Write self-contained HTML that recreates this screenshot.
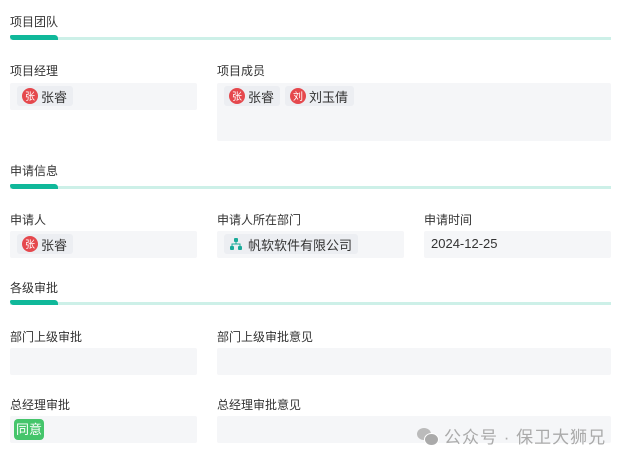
<!DOCTYPE html><html><head><style>
body{margin:0;width:625px;height:460px;background:#fff;font-family:"Liberation Sans","Noto Sans CJK SC",sans-serif;font-size:12px;color:#333;position:relative;overflow:hidden}
.a{position:absolute}
.t{font-size:12px;color:#333}
.line{position:absolute;left:10px;width:601px;height:3px;background:#cdf0e8}
.thick{position:absolute;left:10px;width:48px;height:5px;background:#10b89a;border-radius:2px 4px 0 4px}
.box{position:absolute;background:#f5f6f8;border-radius:2px}
.tag{position:absolute;background:#eceef2;border-radius:3px;height:20px;padding:0 6px 0 5px;font-size:13px;white-space:nowrap;display:flex;align-items:center}
.av{width:16px;height:16px;margin-right:3px;flex:none}
</style></head><body>
<div class="a t" style="left:10px;top:13px">项目团队</div>
<div class="line" style="top:37px"></div><div class="thick" style="top:35px"></div>
<div class="a t" style="left:10px;top:62px">项目经理</div>
<div class="a t" style="left:217px;top:62px">项目成员</div>
<div class="box" style="left:10px;top:83px;width:187px;height:27px"></div>
<div class="tag" style="left:17px;top:86px"><svg class="av" viewBox="0 0 16 16"><circle cx="8" cy="8" r="8" fill="#e5484d"/><text x="8" y="12" text-anchor="middle" font-size="10" fill="#fff" font-family="Noto Sans CJK SC">张</text></svg>张睿</div>
<div class="box" style="left:217px;top:83px;width:394px;height:58px"></div>
<div class="tag" style="left:224px;top:86px"><svg class="av" viewBox="0 0 16 16"><circle cx="8" cy="8" r="8" fill="#e5484d"/><text x="8" y="12" text-anchor="middle" font-size="10" fill="#fff" font-family="Noto Sans CJK SC">张</text></svg>张睿</div>
<div class="tag" style="left:285px;top:86px"><svg class="av" viewBox="0 0 16 16"><circle cx="8" cy="8" r="8" fill="#e5484d"/><text x="8" y="12" text-anchor="middle" font-size="10" fill="#fff" font-family="Noto Sans CJK SC">刘</text></svg>刘玉倩</div>

<div class="a t" style="left:10px;top:162px">申请信息</div>
<div class="line" style="top:186px"></div><div class="thick" style="top:184px"></div>
<div class="a t" style="left:10px;top:211px">申请人</div>
<div class="a t" style="left:217px;top:211px">申请人所在部门</div>
<div class="a t" style="left:424px;top:211px">申请时间</div>
<div class="box" style="left:10px;top:231px;width:187px;height:27px"></div>
<div class="tag" style="left:17px;top:234px"><svg class="av" viewBox="0 0 16 16"><circle cx="8" cy="8" r="8" fill="#e5484d"/><text x="8" y="12" text-anchor="middle" font-size="10" fill="#fff" font-family="Noto Sans CJK SC">张</text></svg>张睿</div>
<div class="box" style="left:217px;top:231px;width:187px;height:27px"></div>
<div class="tag" style="left:224px;top:234px"><svg width="14" height="13" viewBox="0 0 14 13" style="margin-right:5px"><rect x="5" y="0" width="4" height="4" rx="1" fill="#1aaa99"/><path d="M7 4v2M3 8V6h8v2" stroke="#1aaa99" fill="none"/><rect x="1" y="8" width="4" height="4" rx="1" fill="#1aaa99"/><rect x="9" y="8" width="4" height="4" rx="1" fill="#1aaa99"/></svg>帆软软件有限公司</div>
<div class="box" style="left:424px;top:231px;width:187px;height:27px"></div>
<div class="a" style="left:431px;top:236px;font-size:13px">2024-12-25</div>

<div class="a t" style="left:10px;top:279px">各级审批</div>
<div class="line" style="top:302px"></div><div class="thick" style="top:300px"></div>
<div class="a t" style="left:10px;top:328px">部门上级审批</div>
<div class="a t" style="left:217px;top:328px">部门上级审批意见</div>
<div class="box" style="left:10px;top:348px;width:187px;height:27px"></div>
<div class="box" style="left:217px;top:348px;width:394px;height:27px"></div>
<div class="a t" style="left:10px;top:396px">总经理审批</div>
<div class="a t" style="left:217px;top:396px">总经理审批意见</div>
<div class="box" style="left:10px;top:416px;width:187px;height:27px"></div>
<div class="a" style="left:14px;top:419px;width:30px;height:21px;background:#45c56b;border-radius:4px;color:#fff;font-size:13px;line-height:21px;text-align:center">同意</div>
<div class="box" style="left:217px;top:416px;width:394px;height:27px"></div>
<div class="a" style="left:417px;top:423px;color:#aaa;font-size:17px;letter-spacing:1px;white-space:nowrap;display:flex;align-items:center"><span style="display:inline-block;width:21px;height:18px;position:relative;margin-right:6px"><span style="position:absolute;left:0;top:1px;width:14px;height:12px;border-radius:50%;background:#bbb"></span><span style="position:absolute;left:7px;top:6px;width:13px;height:11px;border-radius:50%;background:#aaa;border:1px solid #fff"></span></span>公众号 · 保卫大狮兄</div>
</body></html>
